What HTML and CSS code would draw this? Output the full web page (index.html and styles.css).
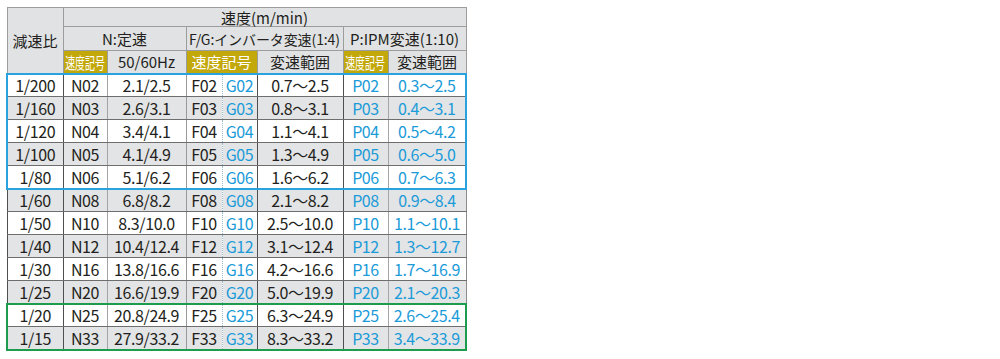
FILE: index.html
```html
<!DOCTYPE html>
<html lang="ja">
<head>
<meta charset="utf-8">
<title>減速比と速度</title>
<link rel="stylesheet" href="styles.css">
</head>
<body>
<table class="spec">
  <colgroup>
    <col class="c-ratio"><col class="c-code"><col class="c-hz"><col class="c-f"><col class="c-g"><col class="c-range"><col class="c-p"><col class="c-prange">
  </colgroup>
  <thead>
    <tr class="h1"><th rowspan="3" class="ratio-h">減速比</th><th colspan="7">速度(m/min)</th></tr>
    <tr class="h2"><th colspan="2">N:定速</th><th colspan="3" class="fg-h">F/G:インバータ変速(1:4)</th><th colspan="2">P:IPM変速(1:10)</th></tr>
    <tr class="h3"><th class="lbl"><span class="narrow">速度記号</span></th><th>50/60Hz</th><th colspan="2" class="lbl">速度記号</th><th>変速範囲</th><th class="lbl"><span class="narrow">速度記号</span></th><th>変速範囲</th></tr>
  </thead>
  <tbody class="grp-blue">
    <tr><td>1/200</td><td class="n">N02</td><td class="hz">2.1/2.5</td><td class="f">F02</td><td class="g">G02</td><td class="r">0.7〜2.5</td><td class="p">P02</td><td class="pr">0.3〜2.5</td></tr>
    <tr class="alt"><td>1/160</td><td class="n">N03</td><td class="hz">2.6/3.1</td><td class="f">F03</td><td class="g">G03</td><td class="r">0.8〜3.1</td><td class="p">P03</td><td class="pr">0.4〜3.1</td></tr>
    <tr><td>1/120</td><td class="n">N04</td><td class="hz">3.4/4.1</td><td class="f">F04</td><td class="g">G04</td><td class="r">1.1〜4.1</td><td class="p">P04</td><td class="pr">0.5〜4.2</td></tr>
    <tr class="alt"><td>1/100</td><td class="n">N05</td><td class="hz">4.1/4.9</td><td class="f">F05</td><td class="g">G05</td><td class="r">1.3〜4.9</td><td class="p">P05</td><td class="pr">0.6〜5.0</td></tr>
    <tr><td>1/80</td><td class="n">N06</td><td class="hz">5.1/6.2</td><td class="f">F06</td><td class="g">G06</td><td class="r">1.6〜6.2</td><td class="p">P06</td><td class="pr">0.7〜6.3</td></tr>
  </tbody>
  <tbody class="grp-plain">
    <tr class="alt"><td>1/60</td><td class="n">N08</td><td class="hz">6.8/8.2</td><td class="f">F08</td><td class="g">G08</td><td class="r">2.1〜8.2</td><td class="p">P08</td><td class="pr">0.9〜8.4</td></tr>
    <tr><td>1/50</td><td class="n">N10</td><td class="hz">8.3/10.0</td><td class="f">F10</td><td class="g">G10</td><td class="r">2.5〜10.0</td><td class="p">P10</td><td class="pr">1.1〜10.1</td></tr>
    <tr class="alt"><td>1/40</td><td class="n">N12</td><td class="hz">10.4/12.4</td><td class="f">F12</td><td class="g">G12</td><td class="r">3.1〜12.4</td><td class="p">P12</td><td class="pr">1.3〜12.7</td></tr>
    <tr><td>1/30</td><td class="n">N16</td><td class="hz">13.8/16.6</td><td class="f">F16</td><td class="g">G16</td><td class="r">4.2〜16.6</td><td class="p">P16</td><td class="pr">1.7〜16.9</td></tr>
    <tr class="alt"><td>1/25</td><td class="n">N20</td><td class="hz">16.6/19.9</td><td class="f">F20</td><td class="g">G20</td><td class="r">5.0〜19.9</td><td class="p">P20</td><td class="pr">2.1〜20.3</td></tr>
  </tbody>
  <tbody class="grp-green">
    <tr><td>1/20</td><td class="n">N25</td><td class="hz">20.8/24.9</td><td class="f">F25</td><td class="g">G25</td><td class="r">6.3〜24.9</td><td class="p">P25</td><td class="pr">2.6〜25.4</td></tr>
    <tr class="alt"><td>1/15</td><td class="n">N33</td><td class="hz">27.9/33.2</td><td class="f">F33</td><td class="g">G33</td><td class="r">8.3〜33.2</td><td class="p">P33</td><td class="pr">3.4〜33.9</td></tr>
  </tbody>
</table>
</body>
</html>
```

FILE: styles.css
```css
html, body {
  margin: 0;
  background: #ffffff;
}
body {
  padding: 7px 0 0 6px;
  font-family: "Noto Sans CJK JP", "Noto Sans", sans-serif;
  color: #231f20;
}
.spec {
  border-collapse: collapse;
  table-layout: fixed;
  width: 459px;
  font-size: 16px;
  font-weight: 400;
  letter-spacing: -0.4px;
  border: 1px solid #8c8c8c;
}
.c-ratio { width: 56px; }
.c-code { width: 44px; }
.c-hz { width: 79px; }
.c-f { width: 36px; }
.c-g { width: 35px; }
.c-range { width: 86px; }
.c-p { width: 45px; }
.c-prange { width: 78px; }

.spec th,
.spec td {
  padding: 0;
  text-align: center;
  white-space: nowrap;
  line-height: 1;
}
.spec td { overflow: hidden; }
.spec th {
  background: #e1e2e4;
  border: 1px solid #9c9c9c;
  font-weight: 400;
  font-size: 15px;
  letter-spacing: 0;
  overflow: visible;
}
.h1 { height: 19px; }
.h2 { height: 24px; }
.h3 { height: 23px; }
.ratio-h { font-size: 15px; }
.spec th.fg-h { font-size: 14px; letter-spacing: -0.1px; }
.spec th.lbl {
  background: #c3a80c;
  color: #ffffff;
}
.narrow {
  display: inline-block;
  margin: 0 -11px;
  font-size: 16px;
  transform: scaleX(0.62);
  transform-origin: center;
}

.spec tbody tr { height: 23px; }
.spec td {
  background: #ffffff;
  border-top: 1px solid #6e6e6e;
  border-bottom: 1px solid #6e6e6e;
  border-left: 1px solid #4f4f4f;
  border-right: none;
}
.spec tr.alt td { background: #e3e4e6; }
.spec td.hz { border-left-color: #a3a3a3; }
.spec td.f { border-left-color: #9a9a9a; }
.spec td.g { border-left: 1px dotted #9bbcd0; color: #1b9bd8; }
.spec td.p { color: #1b9bd8; }
.spec td.pr { color: #1b9bd8; border-left-color: #a6a6a6; }

.grp-blue { border: 2px solid #29a3df; }
.grp-green { border: 2px solid #1d9c4d; }
.grp-plain { border-left: 1px solid #8c8c8c; border-right: 1px solid #8c8c8c; }
```
